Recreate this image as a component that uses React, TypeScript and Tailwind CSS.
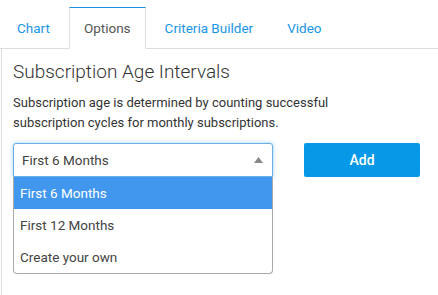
import { useState } from 'react'

const tabs = ['Chart', 'Options', 'Criteria Builder', 'Video']
const options = ['First 6 Months', 'First 12 Months', 'Create your own']

export default function App() {
  const [active, setActive] = useState('Options')
  const [selected, setSelected] = useState(options[0])

  return (
    <div className="w-[438px] h-[295px] overflow-hidden bg-white text-[#333] font-['Roboto','Liberation_Sans',sans-serif]">
      {/* Tabs */}
      <div className="flex pt-[7px] pl-[2px] border-b border-[#dddddd]">
        {tabs.map(t => (
          <button
            key={t}
            onClick={() => setActive(t)}
            className={
              t === active
                ? 'mr-[4px] mb-[-1px] h-[42px] px-[14px] pt-[1px] text-[13.5px] text-[#555] bg-white border border-[#dddddd] border-t-[#1e90e0] border-b-white'
                : 'mr-[4px] mb-[-1px] h-[42px] px-[14px] pt-[1px] text-[13.5px] text-[#1a95e6] border border-transparent'
            }
          >
            {t}
          </button>
        ))}
      </div>

      {/* Panel */}
      <div className="ml-[1px] h-[260px] border-l border-[#dddddd] pl-[11px] pt-[9px]">
        <h2 className="text-[19px] leading-[28px] font-light text-[#333]">Subscription Age Intervals</h2>
        <p className="mt-[7px] text-[13px] leading-[20px] text-[#333] w-[330px]">
          Subscription age is determined by counting successful subscription cycles for monthly subscriptions.
        </p>

        <div className="mt-[10px] flex items-start">
          <div className="w-[260px]">
            <div className="h-[34px] flex items-center justify-between pl-[8px] pr-[9px] border border-[#66afe9] rounded-t-[3px] shadow-[0_0_4px_rgba(102,175,233,0.6)] bg-white">
              <span className="text-[13.5px] text-[#444]">{selected}</span>
              <svg width="9" height="6" viewBox="0 0 9 6"><path d="M0 6 L4.5 0 L9 6 Z" fill="#888" /></svg>
            </div>
            <div className="border border-[#aaaaaa] border-t-0 rounded-b-[4px] overflow-hidden bg-white">
              {options.map(o => (
                <div
                  key={o}
                  onClick={() => setSelected(o)}
                  className={
                    o === selected
                      ? 'h-[32px] flex items-center pl-[6px] text-[13.5px] bg-[#4196ee] text-white'
                      : 'h-[32px] flex items-center pl-[6px] text-[13.5px] text-[#444]'
                  }
                >
                  {o}
                </div>
              ))}
            </div>
          </div>
          <button className="ml-[31px] w-[116px] h-[34px] rounded-[2px] bg-[#0799e8] text-white text-[14px] font-medium">
            Add
          </button>
        </div>
      </div>
    </div>
  )
}
